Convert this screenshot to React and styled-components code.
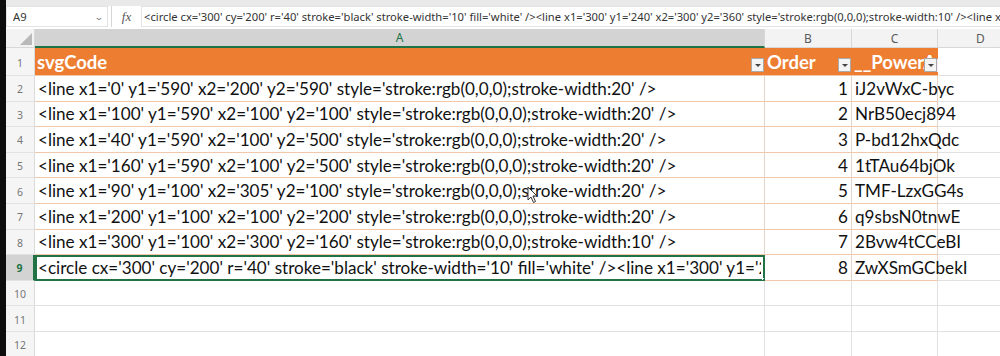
import styled, { createGlobalStyle, css } from "styled-components";

const GlobalStyle = createGlobalStyle`
  html, body {
    margin: 0;
    padding: 0;
    background: #ffffff;
    overflow: hidden;
  }
  * { box-sizing: border-box; }
`;

const CELL_FONT = `"Lato", "Open Sans", sans-serif`;
const UI_FONT = `"Noto Sans", "Open Sans", sans-serif`;
const GREEN = "#217346";
const ORANGE = "#ed7d31";

const rows = [
  ["<line x1='0' y1='590' x2='200' y2='590' style='stroke:rgb(0,0,0);stroke-width:20' />", 1, "iJ2vWxC-byc"],
  ["<line x1='100' y1='590' x2='100' y2='100' style='stroke:rgb(0,0,0);stroke-width:20' />", 2, "NrB50ecj894"],
  ["<line x1='40' y1='590' x2='100' y2='500' style='stroke:rgb(0,0,0);stroke-width:20' />", 3, "P-bd12hxQdc"],
  ["<line x1='160' y1='590' x2='100' y2='500' style='stroke:rgb(0,0,0);stroke-width:20' />", 4, "1tTAu64bjOk"],
  ["<line x1='90' y1='100' x2='305' y2='100' style='stroke:rgb(0,0,0);stroke-width:20' />", 5, "TMF-LzxGG4s"],
  ["<line x1='200' y1='100' x2='100' y2='200' style='stroke:rgb(0,0,0);stroke-width:20' />", 6, "q9sbsN0tnwE"],
  ["<line x1='300' y1='100' x2='300' y2='160' style='stroke:rgb(0,0,0);stroke-width:10' />", 7, "2Bvw4tCCeBI"],
  ["<circle cx='300' cy='200' r='40' stroke='black' stroke-width='10' fill='white' /><line x1='300' y1='240' x2='300' y2='360' style='stroke:rgb(0,0,0);stroke-width:10' />", 8, "ZwXSmGCbekI"],
];

const formula =
  "<circle cx='300' cy='200' r='40' stroke='black' stroke-width='10' fill='white' /><line x1='300' y1='240' x2='300' y2='360' style='stroke:rgb(0,0,0);stroke-width:10' /><line x1='300' y1='300' x2='250' y2='330' style='stroke:rgb(0,0,0);stroke-width:10' />";

const Screen = styled.div`
  display: flex;
  width: 1000px;
  height: 356px;
  overflow: hidden;
  position: relative;
`;

const Bezel = styled.div`
  width: 6px;
  flex: none;
  background: #0d0d0d;
`;

const Main = styled.div`
  flex: 1;
  display: flex;
  flex-direction: column;
  min-width: 0;
`;

const TopStrip = styled.div`
  height: 6px;
  background: #e9e9e9;
  flex: none;
`;

const FormulaBar = styled.div`
  display: flex;
  height: 21px;
  flex: none;
  align-items: stretch;
  font-family: ${UI_FONT};
  font-size: 11.2px;
  color: #444;
  margin-bottom: 2px;
`;

const NameBox = styled.div`
  width: 102px;
  display: flex;
  align-items: center;
  justify-content: space-between;
  padding: 0 4px 0 6px;
  border: 1px solid #e3e3e3;
  color: #333;
`;

const Caret = styled.span`
  font-size: 9px;
  color: #777;
  transform: scaleX(1.3);
`;

const FxArea = styled.div`
  width: 30px;
  display: flex;
  align-items: center;
  justify-content: center;
  border-left: 1px solid #d6d6d6;
  margin-left: 3px;
  font-family: "Liberation Serif", serif;
  font-style: italic;
  font-size: 13px;
  color: #555;
`;

const FormulaInput = styled.div`
  flex: 1;
  display: flex;
  align-items: center;
  padding-left: 2px;
  white-space: nowrap;
  overflow: hidden;
  border: 1px solid #e3e3e3;
  border-right: none;
  color: #333;
`;

const Grid = styled.div`
  display: grid;
  grid-template-columns: 29px 730px 87px 86px 86px;
  grid-template-rows: 19px 28px repeat(11, 25.6px);
`;

const ColHead = styled.div`
  display: flex;
  align-items: center;
  justify-content: center;
  background: ${(p) => (p.$active ? "#d3d3d3" : "#f3f3f3")};
  color: ${(p) => (p.$active ? GREEN : "#5a5a5a")};
  border-right: 1px solid #d8d8d8;
  border-bottom: ${(p) => (p.$active ? `2px solid ${GREEN}` : "1px solid #d8d8d8")};
  font-family: ${UI_FONT};
  font-size: 12px;
`;

const Corner = styled.div`
  background: #f3f3f3;
  border-right: 1px solid #d8d8d8;
  border-bottom: 1px solid #d8d8d8;
  display: flex;
  align-items: flex-end;
  justify-content: flex-end;
  padding: 0 2px 2px 0;
`;

const RowHead = styled.div`
  display: flex;
  align-items: center;
  justify-content: center;
  background: ${(p) => (p.$active ? "#d3d3d3" : "#f5f5f5")};
  color: ${(p) => (p.$active ? GREEN : "#777")};
  font-weight: ${(p) => (p.$active ? 700 : 400)};
  border-right: ${(p) => (p.$active ? `2px solid ${GREEN}` : "1px solid #dadada")};
  border-bottom: 1px solid #e3e3e3;
  font-family: ${UI_FONT};
  font-size: 10.5px;
  padding-top: 2px;
`;

const Cell = styled.div`
  display: flex;
  align-items: center;
  font-family: ${CELL_FONT};
  font-size: 17.1px;
  color: #111;
  white-space: nowrap;
  overflow: ${(p) => (p.$spill ? "visible" : "hidden")};
  padding: 0 3px;
  border-right: 1px solid ${(p) => (p.$table ? "#e6d4c8" : "#e1e1e1")};
  border-bottom: 1px solid ${(p) => (p.$table ? "#f2c8ab" : "#e1e1e1")};
  justify-content: ${(p) => (p.$num ? "flex-end" : "flex-start")};
  ${(p) =>
    p.$selected &&
    css`
      position: relative;
      outline: 2px solid ${GREEN};
      outline-offset: -2px;
    `}
`;

const CellText = styled.span`
  display: block;
  overflow: hidden;
  max-width: 100%;
`;

const HeaderCell = styled.div`
  background: ${ORANGE};
  display: flex;
  align-items: center;
  padding: 0 2px;
  font-family: ${CELL_FONT};
  font-weight: 700;
  font-size: 18.5px;
  color: #fff;
  white-space: nowrap;
  overflow: hidden;
  position: relative;
  border-bottom: 1px solid #f2c8ab;
`;

const FilterButton = styled.span`
  position: absolute;
  right: 1px;
  bottom: 3px;
  width: 13px;
  height: 14px;
  background: #f4f4f4;
  border: 1px solid #a9a9a9;
  display: flex;
  align-items: center;
  justify-content: center;
  &::after {
    content: "";
    border-left: 3px solid transparent;
    border-right: 3px solid transparent;
    border-top: 3px solid #444;
    margin-top: 1px;
  }
`;

const FillHandle = styled.span`
  position: absolute;
  right: -4px;
  bottom: -4px;
  width: 6px;
  height: 6px;
  background: ${GREEN};
  border: 1px solid #fff;
  z-index: 2;
`;

const Cursor = styled.svg`
  position: absolute;
  left: 527px;
  top: 186px;
  pointer-events: none;
`;

function CornerMark() {
  return (
    <svg width="12" height="12" viewBox="0 0 12 12">
      <polygon points="12,0 12,12 0,12" fill="#b9b9b9" />
    </svg>
  );
}

export default function App() {
  return (
    <>
      <GlobalStyle />
      <Screen>
        <Bezel />
        <Main>
          <TopStrip />
          <FormulaBar>
            <NameBox>
              A9
              <Caret>⌄</Caret>
            </NameBox>
            <FxArea>fx</FxArea>
            <FormulaInput>{formula}</FormulaInput>
          </FormulaBar>
          <Grid>
            <Corner>
              <CornerMark />
            </Corner>
            <ColHead $active>A</ColHead>
            <ColHead>B</ColHead>
            <ColHead>C</ColHead>
            <ColHead>D</ColHead>

            <RowHead>1</RowHead>
            <HeaderCell>
              svgCode
              <FilterButton />
            </HeaderCell>
            <HeaderCell>
              Order
              <FilterButton />
            </HeaderCell>
            <HeaderCell>
              __PowerAppsId__
              <FilterButton />
            </HeaderCell>
            <Cell />

            {rows.map(([code, order, id], i) => {
              const selected = i === rows.length - 1;
              return [
                <RowHead key={`h${i}`} $active={selected}>
                  {i + 2}
                </RowHead>,
                <Cell key={`a${i}`} $table $selected={selected}>
                  <CellText>{code}</CellText>
                  {selected && <FillHandle />}
                </Cell>,
                <Cell key={`b${i}`} $table $num>
                  {order}
                </Cell>,
                <Cell key={`c${i}`} $table $spill>
                  {id}
                </Cell>,
                <Cell key={`d${i}`} />,
              ];
            })}

            {[10, 11, 12].map((n) => [
              <RowHead key={`h${n}`}>{n}</RowHead>,
              <Cell key={`a${n}`} />,
              <Cell key={`b${n}`} />,
              <Cell key={`c${n}`} />,
              <Cell key={`d${n}`} />,
            ])}
          </Grid>
        </Main>
        <Cursor width="12" height="18" viewBox="0 0 12 18">
          <path
            d="M1 1 L1 14 L4 11 L6.5 16.5 L8.5 15.5 L6 10 L10 10 Z"
            fill="#fff"
            stroke="#333"
            strokeWidth="1"
            strokeLinejoin="round"
          />
        </Cursor>
      </Screen>
    </>
  );
}
